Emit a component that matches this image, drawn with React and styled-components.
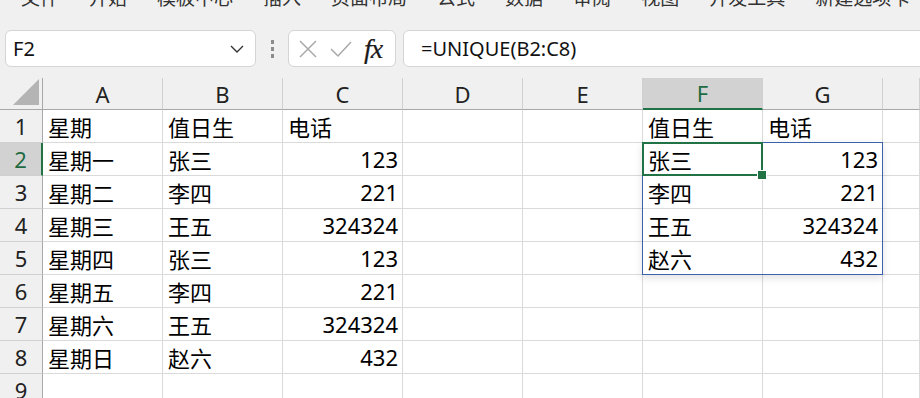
import React from 'react'
import styled, { createGlobalStyle } from 'styled-components'

const GlobalStyle = createGlobalStyle`
  html, body {
    margin: 0;
    padding: 0;
    background: #f0f0f0;
    overflow: hidden;
  }
  * {
    box-sizing: border-box;
  }
`

const FONT = `"Noto Sans", "Noto Sans CJK SC", sans-serif`

const menuItems = ['文件', '开始', '模板中心', '插入', '页面布局', '公式', '数据', '审阅', '视图', '开发工具', '新建选项卡']

const columns = ['A', 'B', 'C', 'D', 'E', 'F', 'G', '']

const rows = [
    ['星期', '值日生', '电话', '', '', '值日生', '电话', ''],
    ['星期一', '张三', 123, '', '', '张三', 123, ''],
    ['星期二', '李四', 221, '', '', '李四', 221, ''],
    ['星期三', '王五', 324324, '', '', '王五', 324324, ''],
    ['星期四', '张三', 123, '', '', '赵六', 432, ''],
    ['星期五', '李四', 221, '', '', '', '', ''],
    ['星期六', '王五', 324324, '', '', '', '', ''],
    ['星期日', '赵六', 432, '', '', '', '', ''],
    ['', '', '', '', '', '', '', ''],
]

const activeCol = 5
const activeRow = 2

const App = () => {
    return (
        <Window>
            <GlobalStyle />
            <MenuBar>
                {menuItems.map((m) => (
                    <MenuItem key={m}>{m}</MenuItem>
                ))}
            </MenuBar>

            <FormulaBar>
                <NameBox>
                    <span>F2</span>
                    <svg width="16" height="10" viewBox="0 0 16 10">
                        <path d="M2 2 L8 8 L14 2" fill="none" stroke="#333" strokeWidth="1.4" />
                    </svg>
                </NameBox>
                <Grip>
                    <i /><i /><i />
                </Grip>
                <FxBox>
                    <svg width="20" height="20" viewBox="0 0 20 20">
                        <path d="M2 2 L18 18 M18 2 L2 18" stroke="#a8a8a8" strokeWidth="1.5" fill="none" />
                    </svg>
                    <svg width="24" height="20" viewBox="0 0 24 20">
                        <path d="M2 10 L9 17 L22 3" stroke="#a8a8a8" strokeWidth="1.5" fill="none" />
                    </svg>
                    <FxLabel>fx</FxLabel>
                </FxBox>
                <FormulaInput>=UNIQUE(B2:C8)</FormulaInput>
            </FormulaBar>

            <Sheet>
                <Corner>
                    <svg width="26" height="26" viewBox="0 0 26 26">
                        <path d="M26 0 L26 26 L0 26 Z" fill="#b4b4b4" />
                    </svg>
                </Corner>
                {columns.map((c, i) => (
                    <ColHeader key={'h' + i} $c={i + 2} $active={i === activeCol}>{c}</ColHeader>
                ))}
                {rows.map((r, ri) => (
                    <React.Fragment key={'r' + ri}>
                        <RowHeader $r={ri + 2} $active={ri + 1 === activeRow}>{ri + 1}</RowHeader>
                        {r.map((v, ci) => (
                            <Cell key={ci} $r={ri + 2} $c={ci + 2} $num={typeof v === 'number'}>{v}</Cell>
                        ))}
                    </React.Fragment>
                ))}
                <SpillRange />
                <Selection>
                    <FillHandle />
                </Selection>
            </Sheet>
        </Window>
    )
}

export default App

const Window = styled.div`
  width: 920px;
  height: 398px;
  overflow: hidden;
  background: #f0f0f0;
  font-family: ${FONT};
`

const MenuBar = styled.div`
  height: 8px;
  overflow: hidden;
  display: flex;
  align-items: flex-end;
  gap: 30px;
  padding-left: 21px;
`

const MenuItem = styled.div`
  flex: none;
  font-size: 19px;
  line-height: 19px;
  color: #333;
  white-space: nowrap;
`

const FormulaBar = styled.div`
  display: flex;
  align-items: stretch;
  height: 37px;
  margin-top: 22px;
  padding-left: 5px;
`

const Box = styled.div`
  background: #fff;
  border: 1px solid #d5d5d5;
  border-radius: 6px;
  display: flex;
  align-items: center;
`

const NameBox = styled(Box)`
  width: 251px;
  padding: 0 10px 0 7px;
  justify-content: space-between;
  font-size: 20px;
  color: #111;
`

const Grip = styled.div`
  width: 32px;
  display: flex;
  flex-direction: column;
  align-items: center;
  justify-content: center;
  gap: 3px;
  i {
    display: block;
    width: 3px;
    height: 4px;
    background: #8c8c8c;
  }
`

const FxBox = styled(Box)`
  width: 108px;
  padding: 0 6px 0 9px;
  gap: 11px;
`

const FxLabel = styled.span`
  font-family: "Liberation Serif", "DejaVu Serif", serif;
  font-style: italic;
  font-size: 28px;
  line-height: 1;
  color: #1a1a1a;
  letter-spacing: -1px;
  -webkit-text-stroke: 0.2px #1a1a1a;
`

const FormulaInput = styled(Box)`
  flex: 1;
  margin-left: 7px;
  margin-right: -10px;
  padding-left: 17px;
  font-size: 20px;
  color: #111;
`

const Sheet = styled.div`
  margin-top: 11px;
  display: grid;
  grid-template-columns: 43px repeat(7, 120px) 1fr;
  grid-template-rows: 32px repeat(9, 33px);
  background: #fff;
`

const Corner = styled.div`
  grid-row: 1;
  grid-column: 1;
  background: #f0f0f0;
  border-right: 1px solid #a8a8a8;
  border-bottom: 1px solid #a8a8a8;
  display: flex;
  align-items: flex-end;
  justify-content: flex-end;
  padding: 0 3px 4px 0;
`

const ColHeader = styled.div`
  grid-row: 1;
  grid-column: ${(p) => p.$c};
  background: ${(p) => (p.$active ? '#d2d2d2' : '#f0f0f0')};
  color: ${(p) => (p.$active ? '#1e6b41' : '#222')};
  border-right: 1px solid #d0d0d0;
  border-bottom: ${(p) => (p.$active ? '2px solid #217346' : '1px solid #a8a8a8')};
  display: flex;
  align-items: center;
  justify-content: center;
  font-size: 22px;
`

const RowHeader = styled.div`
  grid-row: ${(p) => p.$r};
  grid-column: 1;
  background: ${(p) => (p.$active ? '#d2d2d2' : '#f0f0f0')};
  color: ${(p) => (p.$active ? '#1e6b41' : '#222')};
  border-right: ${(p) => (p.$active ? '2px solid #217346' : '1px solid #a8a8a8')};
  border-bottom: 1px solid #d0d0d0;
  display: flex;
  align-items: center;
  justify-content: center;
  font-size: 22px;
`

const Cell = styled.div`
  grid-row: ${(p) => p.$r};
  grid-column: ${(p) => p.$c};
  border-right: 1px solid #dadada;
  border-bottom: 1px solid #dadada;
  display: flex;
  align-items: center;
  justify-content: ${(p) => (p.$num ? 'flex-end' : 'flex-start')};
  padding: 0 4px 0 5px;
  font-size: 22px;
  color: #000;
  white-space: nowrap;
  overflow: hidden;
`

const SpillRange = styled.div`
  grid-column: 7 / 9;
  grid-row: 3 / 7;
  margin: -1px 0 0 -1px;
  border: 1px solid #3b63ad;
  box-shadow: 0 3px 8px rgba(0, 0, 0, 0.12);
  pointer-events: none;
`

const Selection = styled.div`
  position: relative;
  grid-column: 7 / 8;
  grid-row: 3 / 4;
  margin: -1px 0 0 -1px;
  border: 2px solid #217346;
  pointer-events: none;
`

const FillHandle = styled.div`
  position: absolute;
  right: -5px;
  bottom: -5px;
  width: 8px;
  height: 8px;
  background: #217346;
  outline: 1px solid #fff;
`
